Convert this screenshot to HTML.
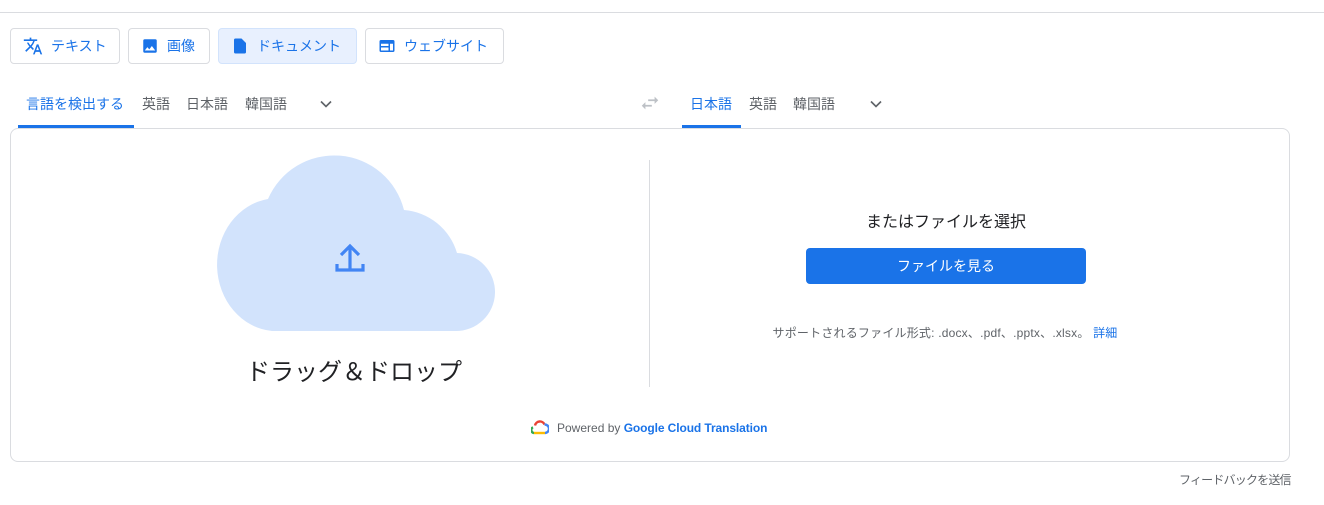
<!DOCTYPE html>
<html><head><meta charset="utf-8"><style>
*{box-sizing:border-box;margin:0;padding:0}
body{width:1324px;height:505px;background:#fff;font-family:"Liberation Sans","Noto Sans CJK JP",sans-serif;position:relative;overflow:hidden;color:#3c4043}
.abs{position:absolute}
.topline{left:0;top:12px;width:1324px;height:1px;background:#dadce0}
.btn{position:absolute;top:28px;height:36px;border:1px solid #dadce0;border-radius:4px;font-size:14px;color:#1a73e8;display:flex;align-items:center;padding-left:12px}
.btn svg{margin-right:8px}
.tab{position:absolute;top:94px;font-size:14px;color:#5f6368}
.card{left:10px;top:128px;width:1280px;height:334px;border:1px solid #dadce0;border-radius:8px}
</style></head><body>
<div class="abs topline"></div>
<div class="btn" style="left:10px;width:110px"><svg width="20" height="20" viewBox="0 0 24 24"><path fill="#1a73e8" d="M12.87 15.07l-2.54-2.51.03-.03A17.5 17.5 0 0014.07 6H17V4h-7V2H8v2H1v2h11.17C11.5 7.92 10.44 9.75 9 11.35 8.07 10.32 7.3 9.19 6.690 8h-2c.73 1.63 1.730 3.17 2.98 4.56l-5.09 5.02L4 19l5-5 3.11 3.11.76-2.04zM18.5 10h-2L12 22h2l1.12-3h4.75L21 22h2l-4.5-12zm-2.62 7l1.62-4.33L19.12 17h-3.24z"/></svg>テキスト</div>
<div class="btn" style="left:128px;width:82px"><svg width="18" height="18" viewBox="0 0 24 24"><path fill="#1a73e8" d="M21 19V5a2 2 0 00-2-2H5a2 2 0 00-2 2v14a2 2 0 002 2h14a2 2 0 002-2zM8.5 13.5l2.5 3 3.5-4.5 4.5 6H5l3.5-4.5z"/></svg>画像</div>
<div class="btn" style="left:218px;width:139px;background:#e8f0fe;border-color:#d2e3fc"><svg width="18" height="18" viewBox="0 0 24 24"><path fill="#1a73e8" d="M14 2H6a2 2 0 00-2 2v16a2 2 0 002 2h12a2 2 0 002-2V8l-6-6z"/></svg>ドキュメント</div>
<div class="btn" style="left:365px;width:139px"><svg width="18" height="18" viewBox="0 0 24 24"><path fill="#1a73e8" d="M20 4H4a2 2 0 00-2 2v12a2 2 0 002 2h16a2 2 0 002-2V6a2 2 0 00-2-2zM4 9h10v3H4V9zm0 5h10v4H4v-4zm16 4h-4V9h4v9z"/></svg>ウェブサイト</div>

<div class="tab" style="left:26px;color:#1a73e8">言語を検出する</div>
<div class="abs" style="left:18px;top:125px;width:116px;height:3px;background:#1a73e8"></div>
<div class="tab" style="left:142px">英語</div>
<div class="tab" style="left:186px">日本語</div>
<div class="tab" style="left:245px">韓国語</div>
<svg class="abs" style="left:316px;top:94px" width="20" height="20" viewBox="0 0 24 24"><path d="M6 9l6 6 6-6" fill="none" stroke="#5f6368" stroke-width="2"/></svg>
<svg class="abs" style="left:639px;top:92px" width="22" height="22" viewBox="0 0 24 24"><path fill="#bdc1c6" d="M6.99 11L3 15l3.99 4v-3H14v-2H6.99v-3zM21 9l-3.99-4v3H10v2h7.01v3L21 9z"/></svg>
<div class="tab" style="left:690px;color:#1a73e8">日本語</div>
<div class="abs" style="left:682px;top:125px;width:59px;height:3px;background:#1a73e8"></div>
<div class="tab" style="left:749px">英語</div>
<div class="tab" style="left:793px">韓国語</div>
<svg class="abs" style="left:866px;top:94px" width="20" height="20" viewBox="0 0 24 24"><path d="M6 9l6 6 6-6" fill="none" stroke="#5f6368" stroke-width="2"/></svg>

<div class="abs card"></div>
<svg class="abs" style="left:0;top:0" width="660" height="400">
<path fill="#d2e3fc" d="M268 199A72 72 0 0 1 404 210A60 60 0 0 1 457 253A39 39 0 0 1 455 331H272A60 66.5 0 0 1 268 199Z"/>
<path d="M350 270V248M341 255l9-9 9 9M337 264v6h26v-6" fill="none" stroke="#4285f4" stroke-width="3.2"/>
</svg>
<div class="abs" style="left:214px;top:352px;width:280px;text-align:center;font-size:24px;color:#202124">ドラッグ＆ドロップ</div>
<div class="abs" style="left:649px;top:160px;width:1px;height:227px;background:#dadce0"></div>
<div class="abs" style="left:806px;top:208px;width:280px;text-align:center;font-size:16px;color:#202124">またはファイルを選択</div>
<div class="abs" style="left:806px;top:248px;width:280px;height:36px;background:#1a73e8;border-radius:4px;color:#fff;font-size:14px;text-align:center;line-height:36px">ファイルを見る</div>
<div class="abs" style="left:650px;top:324px;width:590px;text-align:center;font-size:12px;color:#5f6368;letter-spacing:0.2px">サポートされるファイル形式: .docx、.pdf、.pptx、.xlsx。 <span style="color:#1a73e8">詳細</span></div>
<svg class="abs" style="left:531px;top:420px" width="18" height="16" viewBox="0 0 18 16"><path d="M3 13a3 3 0 01-1-5.7" fill="none" stroke="#34a853" stroke-width="2.4"/><path d="M4 5.5a5 5 0 019.5-1" fill="none" stroke="#ea4335" stroke-width="2.4"/><path d="M13.5 4.5A3.5 3.5 0 0114 13" fill="none" stroke="#4285f4" stroke-width="2.4"/><path d="M3 13h11" stroke="#fbbc04" stroke-width="2.4"/></svg>
<div class="abs" style="left:557px;top:421px;font-size:12px;color:#5f6368">Powered by <b style="color:#1a73e8;font-weight:bold;letter-spacing:-0.1px">Google Cloud Translation</b></div>
<div class="abs" style="left:1179px;top:471px;font-size:12px;color:#5f6368;letter-spacing:-0.8px">フィードバックを送信</div>
</body></html>
